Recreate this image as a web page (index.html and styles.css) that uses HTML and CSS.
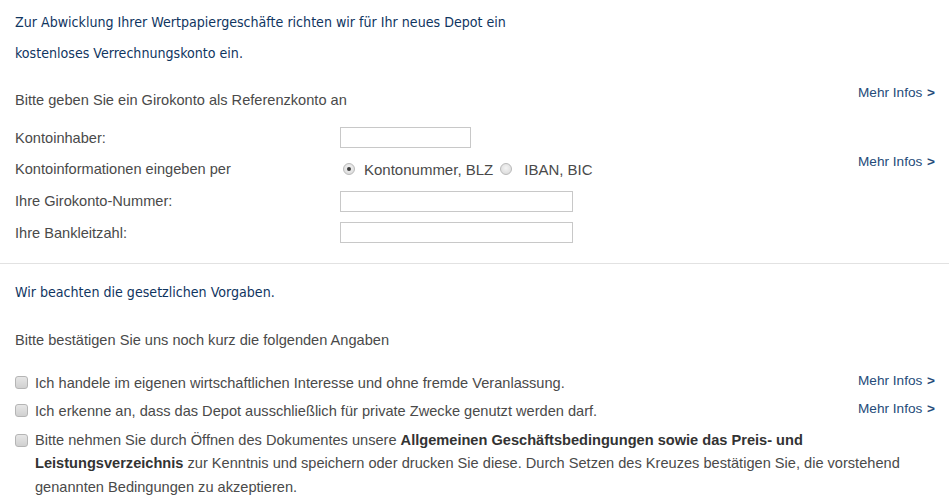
FILE: index.html
```html
<!DOCTYPE html>
<html lang="de">
<head>
<meta charset="utf-8">
<title>Verrechnungskonto</title>
<link rel="stylesheet" href="styles.css">
</head>
<body>
<div class="page">
  <h2 class="title">Zur Abwicklung Ihrer Wertpapiergeschäfte richten wir für Ihr neues Depot ein<br>kostenloses Verrechnungskonto ein.</h2>

  <div class="row intro-row">
    <p class="text">Bitte geben Sie ein Girokonto als Referenzkonto an</p>
    <a class="more" href="#">Mehr Infos <span class="chev">&gt;</span></a>
  </div>

  <div class="form">
    <div class="frow">
      <label class="lbl">Kontoinhaber:</label>
      <span class="input short"></span>
    </div>
    <div class="frow">
      <label class="lbl">Kontoinformationen eingeben per</label>
      <div class="radios">
        <span class="radio checked"></span><span class="rlabel">Kontonummer, BLZ</span>
        <span class="radio"></span><span class="rlabel">IBAN, BIC</span>
      </div>
      <a class="more more-form" href="#">Mehr Infos <span class="chev">&gt;</span></a>
    </div>
    <div class="frow">
      <label class="lbl">Ihre Girokonto-Nummer:</label>
      <span class="input long"></span>
    </div>
    <div class="frow">
      <label class="lbl">Ihre Bankleitzahl:</label>
      <span class="input long"></span>
    </div>
  </div>

  <hr class="divider">

  <h2 class="title sub">Wir beachten die gesetzlichen Vorgaben.</h2>

  <p class="text confirm">Bitte bestätigen Sie uns noch kurz die folgenden Angaben</p>

  <div class="checks">
    <div class="crow">
      <span class="cbox"></span>
      <p class="ctext">Ich handele im eigenen wirtschaftlichen Interesse und ohne fremde Veranlassung.</p>
      <a class="more" href="#">Mehr Infos <span class="chev">&gt;</span></a>
    </div>
    <div class="crow">
      <span class="cbox"></span>
      <p class="ctext">Ich erkenne an, dass das Depot ausschließlich für private Zwecke genutzt werden darf.</p>
      <a class="more" href="#">Mehr Infos <span class="chev">&gt;</span></a>
    </div>
    <div class="crow long-row">
      <span class="cbox"></span>
      <p class="ctext">Bitte nehmen Sie durch Öffnen des Dokumentes unsere <b>Allgemeinen Geschäftsbedingungen sowie das Preis- und Leistungsverzeichnis</b> zur Kenntnis und speichern oder drucken Sie diese. Durch Setzen des Kreuzes bestätigen Sie, die vorstehend genannten Bedingungen zu akzeptieren.</p>
    </div>
  </div>
</div>
</body>
</html>
```

FILE: styles.css
```css
html, body {
  margin: 0;
  padding: 0;
  background: #ffffff;
}

.page {
  font-family: "Liberation Sans", Arial, sans-serif;
  font-size: 14.6px;
  color: #4a4a4a;
  padding-top: 7px;
}

.title {
  margin: 0;
  padding: 0 15px;
  font-family: "DejaVu Sans Condensed", "DejaVu Sans", sans-serif;
  font-stretch: condensed;
  font-weight: normal;
  font-size: 14.1px;
  line-height: 31px;
  color: #0f355f;
}

.row {
  display: flex;
  align-items: flex-start;
  padding: 0 14px 0 15px;
}

.intro-row {
  margin-top: 17px;
}

.text {
  margin: 0;
  line-height: 20px;
}

.intro-row .text {
  flex: 1;
  padding-top: 4px;
}

.more {
  font-size: 13.6px;
  line-height: 14px;
  color: #254b79;
  text-decoration: none;
  white-space: nowrap;
}

.chev {
  font-weight: bold;
  margin-left: 1px;
}

.form {
  margin-top: 12px;
  padding: 0 14px 0 15px;
}

.frow {
  display: flex;
  align-items: center;
  height: 31.67px;
}

.lbl {
  width: 325px;
  flex: none;
}

.input {
  display: block;
  border: 1px solid #c8c8c8;
  background: #fff;
  box-sizing: border-box;
  height: 21px;
}

.short { width: 131px; }
.long { width: 233px; }

.radios {
  display: flex;
  align-items: center;
  flex: 1;
}

.radio {
  width: 12px;
  height: 12px;
  box-sizing: border-box;
  border-radius: 50%;
  border: 1px solid #b9b9b9;
  background: radial-gradient(circle at 50% 40%, #f4f4f4, #d6d6d6);
  margin-left: 3px;
  margin-right: 9px;
  position: relative;
}

.radio.checked::after {
  content: "";
  position: absolute;
  left: 3px;
  top: 3px;
  width: 4px;
  height: 4px;
  border-radius: 50%;
  background: #3c3c3c;
}

.rlabel + .radio {
  margin-left: 7px;
  margin-right: 12px;
}

.rlabel {
  font-size: 15px;
}

.more-form {
  align-self: flex-start;
  margin-top: 1px;
}

.divider {
  margin: 14px 0 0 0;
  border: 0;
  border-top: 1px solid #e2e2e2;
  height: 0;
}

.sub {
  margin-top: 13px;
}

.confirm {
  margin-top: 22px;
  padding: 0 15px;
}

.checks {
  margin-top: 23px;
  padding: 0 14px 0 15px;
}

.crow {
  display: flex;
  align-items: flex-start;
  margin-bottom: 8px;
}

.cbox {
  flex: none;
  width: 13px;
  height: 13px;
  box-sizing: border-box;
  border: 1px solid #b5b5b5;
  border-radius: 3px;
  background: linear-gradient(#e6e6e6, #d0d0d0);
  margin-top: 3px;
  margin-right: 7px;
}

.ctext {
  flex: 1;
  margin: 0;
  line-height: 20px;
}

.crow .more {
  margin-top: 1px;
}

.long-row {
  margin-top: 1px;
}

.long-row .ctext {
  line-height: 23.5px;
}

.long-row .cbox {
  margin-top: 5px;
}

.ctext b {
  color: #333;
}
```
